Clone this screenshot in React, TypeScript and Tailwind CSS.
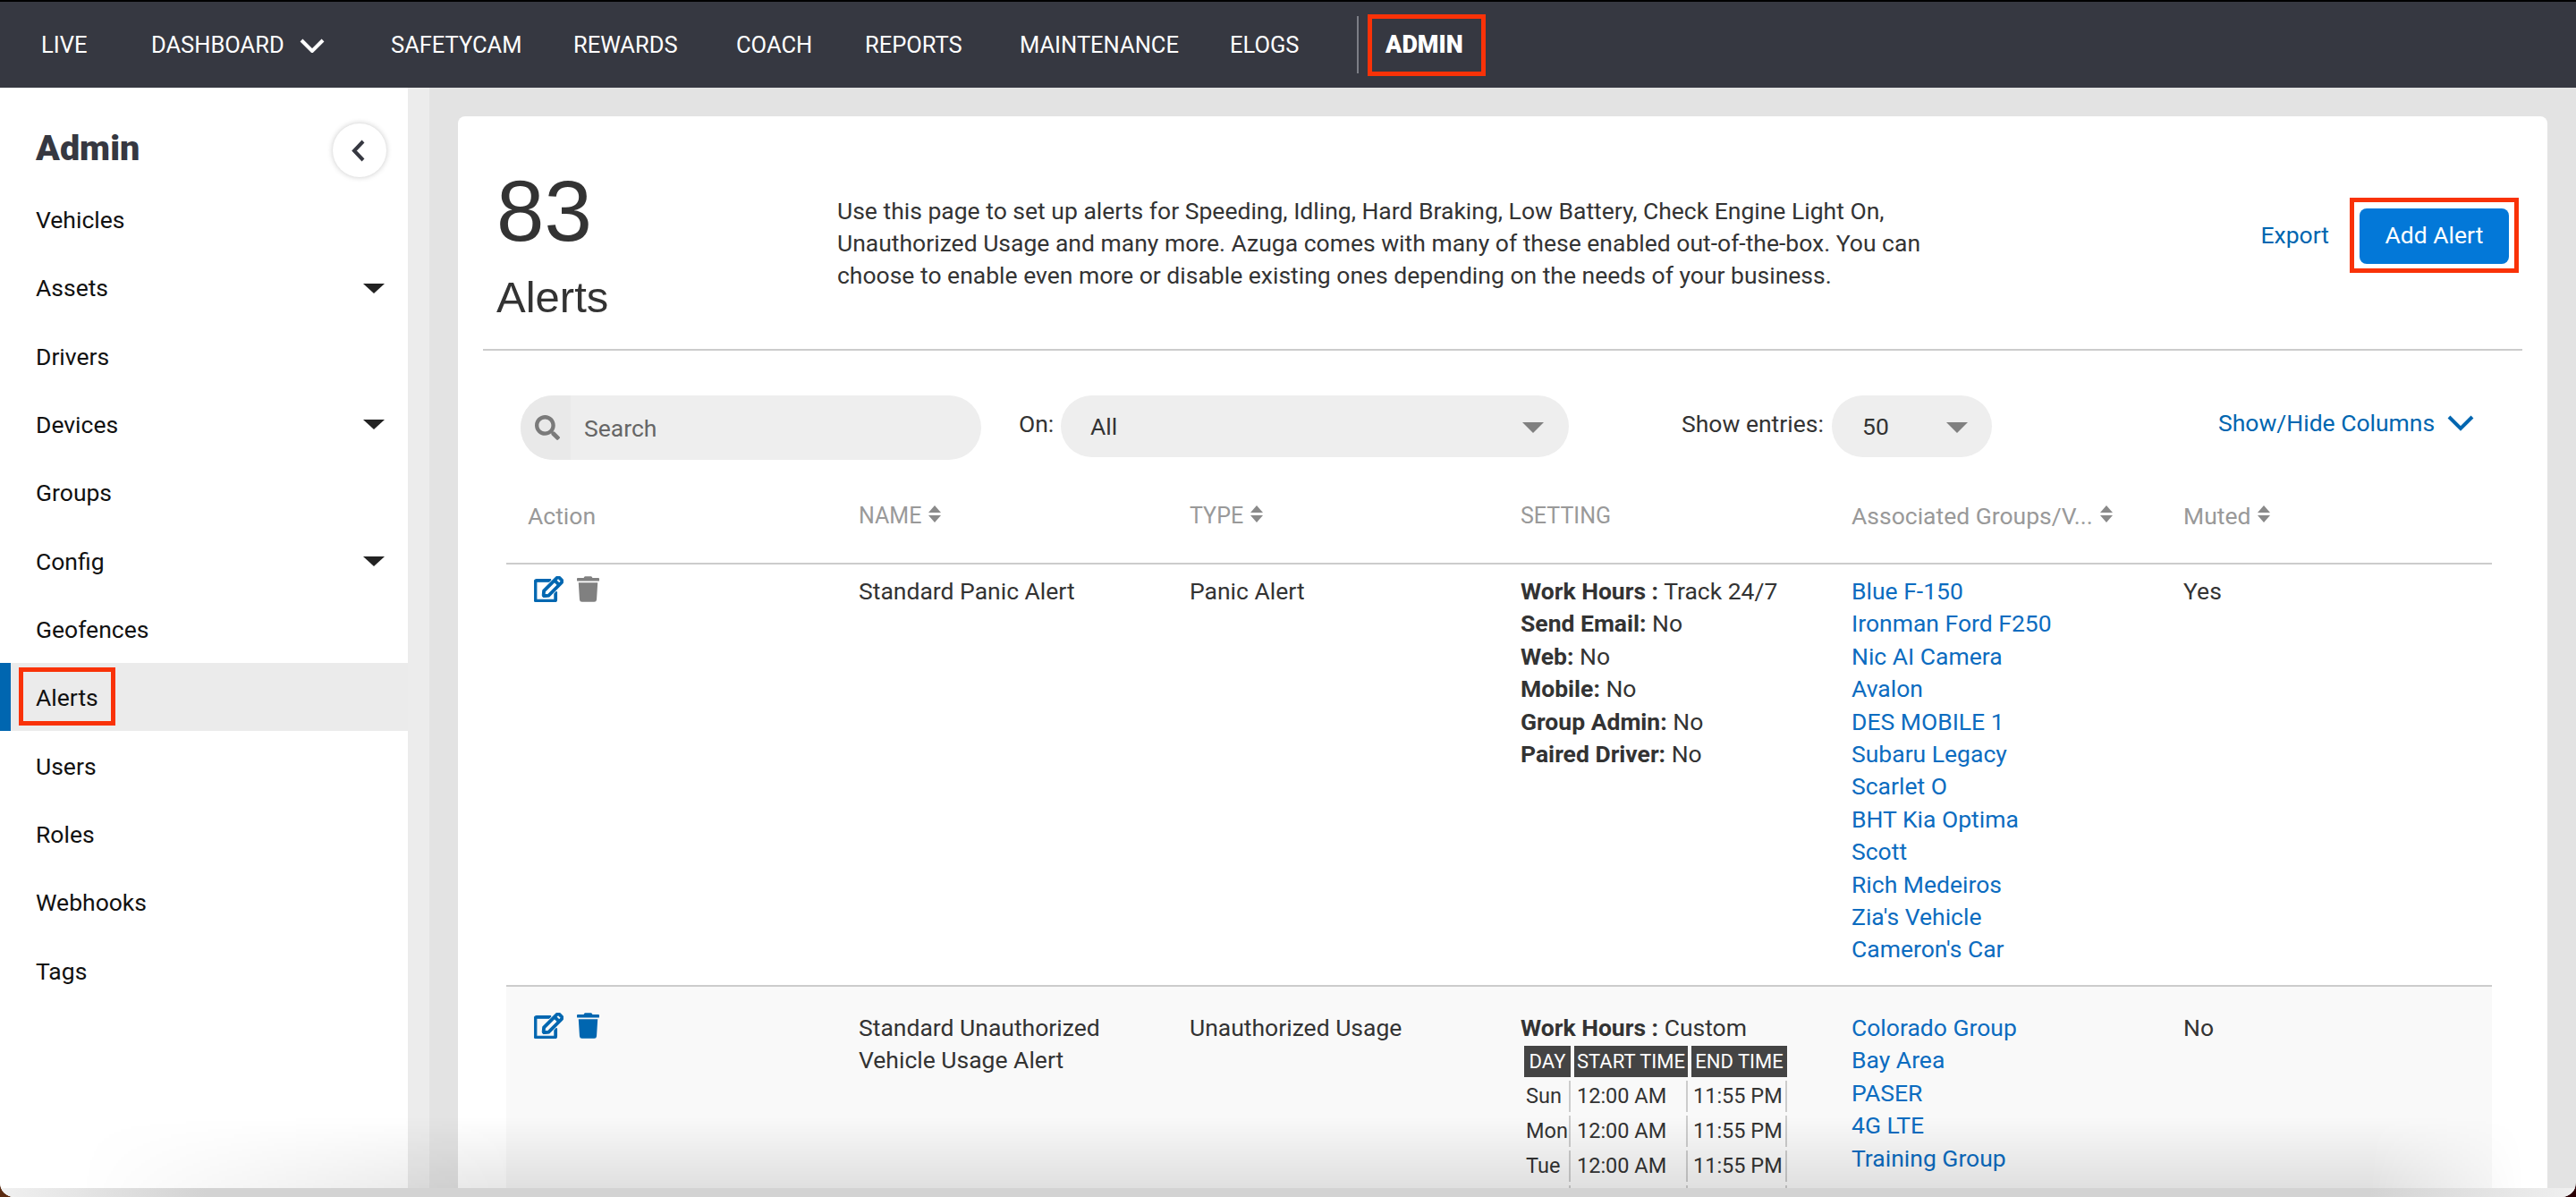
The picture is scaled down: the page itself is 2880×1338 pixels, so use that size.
import { FaRegEdit, FaTrash, FaSearch } from "react-icons/fa";

const columns = "grid grid-cols-[370px_370px_370px_370px_371px_369px]";

const nav = [
  { label: "LIVE", width: "w-[123px]" },
  { label: "DASHBOARD", width: "w-[268px]", chevron: true },
  { label: "SAFETYCAM", width: "w-[204px]" },
  { label: "REWARDS", width: "w-[182px]" },
  { label: "COACH", width: "w-[144px]" },
  { label: "REPORTS", width: "w-[173px]" },
  { label: "MAINTENANCE", width: "w-[235px]" },
  { label: "ELOGS", width: "w-[142px]" },
];

const side = [
  { label: "Vehicles" },
  { label: "Assets", caret: true },
  { label: "Drivers" },
  { label: "Devices", caret: true },
  { label: "Groups" },
  { label: "Config", caret: true },
  { label: "Geofences" },
  { label: "Alerts", active: true },
  { label: "Users" },
  { label: "Roles" },
  { label: "Webhooks" },
  { label: "Tags" },
];

const groupsA = [
  "Blue F-150",
  "Ironman Ford F250",
  "Nic AI Camera",
  "Avalon",
  "DES MOBILE 1",
  "Subaru Legacy",
  "Scarlet O",
  "BHT Kia Optima",
  "Scott",
  "Rich Medeiros",
  "Zia's Vehicle",
  "Cameron's Car",
];
const groupsB = ["Colorado Group", "Bay Area", "PASER", "4G LTE", "Training Group"];
const settings = [
  ["Send Email:", "No"],
  ["Web:", "No"],
  ["Mobile:", "No"],
  ["Group Admin:", "No"],
  ["Paired Driver:", "No"],
];
const days = ["Sun", "Mon", "Tue"];

function Sort() {
  return (
    <svg width="14" height="19" viewBox="0 0 14 19" className="mb-[6px] ml-[8px] shrink-0 fill-[#8a8a8a]">
      <polygon points="7,0 14,8 0,8" />
      <polygon points="0,11 14,11 7,19" />
    </svg>
  );
}

function SelectArrow() {
  return (
    <svg width="24" height="12" viewBox="0 0 24 12" className="fill-[#808080]">
      <polygon points="0,0 24,0 12,12" />
    </svg>
  );
}

function Head({ children, sort, upper }: { children: string; sort?: boolean; upper?: boolean }) {
  return (
    <div className={`flex items-center whitespace-nowrap pl-[24px] text-[#999999] ${upper ? "text-[25px]" : "text-[26.5px]"}`}>
      {children}
      {sort && <Sort />}
    </div>
  );
}

function Links({ items }: { items: string[] }) {
  return (
    <div className="pl-[24px] text-[#0c6cc0]">
      {items.map((g) => (
        <div key={g}>{g}</div>
      ))}
    </div>
  );
}

function Actions({ trash }: { trash: string }) {
  return (
    <div className="flex gap-[15px] pl-[31px] pt-[1px]">
      <FaRegEdit stroke="currentColor" strokeWidth={18} className="h-[29px] w-[33px] text-[#0066b0]" />
      <FaTrash className={`h-[29px] w-[25px] ${trash}`} />
    </div>
  );
}

export default function App() {
  return (
    <div className="h-[1338px] w-[2880px] overflow-hidden bg-[linear-gradient(to_right,#5a2a10,#5a2a10_50%,#2a0005)] [font-family:Roboto,'Liberation_Sans',sans-serif]">
      <div className="relative flex h-[1338px] flex-col overflow-hidden rounded-b-[16px] bg-[#e3e3e3]">
        <header className="flex h-[98px] shrink-0 items-center border-t-2 border-black bg-[#363841] pl-[46px] text-[25.5px] text-white">
          {nav.map((n) => (
            <div key={n.label} className={`flex items-center pt-[1px] ${n.width}`}>
              {n.label}
              {n.chevron && (
                <svg width="28" height="16" viewBox="0 0 28 16" className="ml-[17px] fill-none stroke-white stroke-[4]">
                  <polyline points="2,2 14,14 26,2" />
                </svg>
              )}
            </div>
          ))}
          <div className="h-[64px] w-[2px] bg-[#7c7e86]" />
          <div className="ml-[10px] flex h-[69px] w-[132px] items-center border-[5px] border-[#f93208] pl-[15px] text-[27px] font-black">
            ADMIN
          </div>
        </header>

        <div className="flex min-h-0 flex-1">
          <aside className="w-[456px] shrink-0 bg-white text-[26.5px] text-[#111111]">
            <div className="flex h-[108px] items-center justify-between pl-[40px] pr-[24px] pt-[32px]">
              <span className="mb-[4px] text-[39.5px] font-black text-[#363841]">Admin</span>
              <div className="flex h-[60px] w-[60px] items-center justify-center rounded-full bg-white shadow-[0_0_6px_rgba(0,0,0,0.22)]">
                <svg width="18" height="25" viewBox="0 0 18 25" className="mr-[2px] fill-none stroke-[#363841] stroke-[4]">
                  <polyline points="14,2 4,12.5 14,23" />
                </svg>
              </div>
            </div>
            {side.map((s) =>
              s.active ? (
                <div key={s.label} className="flex h-[76.36px] items-center border-l-[12px] border-[#0066b0] bg-[#ebebeb] pl-[9px]">
                  <div className="flex h-[65px] items-center border-[5px] border-[#f93208] px-[14px] pt-[3px]">{s.label}</div>
                </div>
              ) : (
                <div key={s.label} className="flex h-[76.36px] items-center justify-between pl-[40px] pr-[26px] pt-[3px]">
                  {s.label}
                  {s.caret && (
                    <svg width="24" height="11" viewBox="0 0 24 11" className="fill-[#222222]">
                      <polygon points="0,0 24,0 12,11" />
                    </svg>
                  )}
                </div>
              )
            )}
          </aside>

          <div className="w-[24px] shrink-0 bg-[#ececec]" />

          <main className="min-w-0 flex-1 pb-0 pl-[32px] pr-[32px] pt-[32px]">
            <div className="h-full overflow-hidden rounded-t-[8px] bg-white text-[26.5px] leading-[36.4px] text-[#333333]">
              <div className="mx-[28px] flex h-[262px] border-b-2 border-[#cccccc]">
                <div className="w-[396px] shrink-0 pl-[15px] pt-[58px] [font-family:'Liberation_Sans',sans-serif]">
                  <div className="text-[96px] leading-[96px]">83</div>
                  <div className="mt-[18px] text-[49px] leading-[60px]">Alerts</div>
                </div>
                <p className="whitespace-nowrap pt-[88px] leading-[36px]">
                  Use this page to set up alerts for Speeding, Idling, Hard Braking, Low Battery, Check Engine Light On,
                  <br />
                  Unauthorized Usage and many more. Azuga comes with many of these enabled out-of-the-box. You can
                  <br />
                  choose to enable even more or disable existing ones depending on the needs of your business.
                </p>
                <div className="ml-auto mr-[4px] mt-[91px] flex items-center gap-[23px] self-start">
                  <span className="text-[#0066b0]">Export</span>
                  <div className="flex h-[84px] w-[189px] items-center justify-center border-[5px] border-[#f93208]">
                    <button className="mt-[1px] h-[62px] w-[167px] rounded-[8px] bg-[#0378d8] text-white">Add Alert</button>
                  </div>
                </div>
              </div>

              <div className="mt-[50px] flex items-start pl-[70px]">
                <div className="flex h-[72px] w-[515px] overflow-hidden rounded-full bg-[#eeeeee]">
                  <div className="flex w-[56px] items-center justify-center bg-[#e9e9e9] pl-[4px]">
                    <FaSearch className="h-[28px] w-[28px] text-[#7a7a7a]" />
                  </div>
                  <div className="flex items-center pl-[15px] pt-[2px] text-[#666666]">Search</div>
                </div>
                <div className="ml-[42px] flex h-[64px] w-[47px] items-center">On:</div>
                <div className="flex h-[69px] w-[568px] items-center justify-between rounded-full bg-[#eeeeee] pl-[33px] pr-[28px] pt-[2px]">
                  All
                  <SelectArrow />
                </div>
                <div className="ml-[126px] flex h-[64px] w-[168px] items-center whitespace-nowrap">Show entries:</div>
                <div className="flex h-[69px] w-[179px] items-center justify-between rounded-full bg-[#eeeeee] pl-[34px] pr-[27px] pt-[2px]">
                  50
                  <SelectArrow />
                </div>
                <div className="ml-[253px] flex h-[62px] items-center whitespace-nowrap text-[#0066b0]">
                  Show/Hide Columns
                  <svg width="30" height="18" viewBox="0 0 30 18" className="ml-[14px] fill-none stroke-[#0066b0] stroke-[4]">
                    <polyline points="2,2 15,15 28,2" />
                  </svg>
                </div>
              </div>

              <div className="ml-[54px] w-[2220px]">
                <div className={`${columns} h-[117px] items-center border-b-2 border-[#cccccc] pt-[11px]`}>
                  <Head>Action</Head>
                  <Head sort upper>NAME</Head>
                  <Head sort upper>TYPE</Head>
                  <Head upper>SETTING</Head>
                  <Head sort>Associated Groups/V...</Head>
                  <Head sort>Muted</Head>
                </div>

                <div className={`${columns} border-b-2 border-[#cccccc] pb-[21px] pt-[12px]`}>
                  <Actions trash="text-[#808080]" />
                  <div className="pl-[24px]">Standard Panic Alert</div>
                  <div className="pl-[24px]">Panic Alert</div>
                  <div className="pl-[24px]">
                    <div>
                      <b>Work Hours :</b> Track 24/7
                    </div>
                    {settings.map(([k, v]) => (
                      <div key={k}>
                        <b>{k}</b> {v}
                      </div>
                    ))}
                  </div>
                  <Links items={groupsA} />
                  <div className="pl-[24px]">Yes</div>
                </div>

                <div className={`${columns} bg-[#f9f9f9] pt-[28px]`}>
                  <Actions trash="text-[#0066b0]" />
                  <div className="pl-[24px]">
                    Standard Unauthorized
                    <br />
                    Vehicle Usage Alert
                  </div>
                  <div className="pl-[24px]">Unauthorized Usage</div>
                  <div className="pl-[24px]">
                    <div>
                      <b>Work Hours :</b> Custom
                    </div>
                    <div className="ml-[4px] mt-[2px] grid grid-cols-[52px_127px_107px] gap-[4px] text-[23.5px] leading-[35px]">
                      <div className="bg-[#444444] text-center text-[22px] text-white">DAY</div>
                      <div className="bg-[#444444] text-center text-[22px] text-white">START TIME</div>
                      <div className="bg-[#444444] text-center text-[22px] text-white">END TIME</div>
                      {days.map((d) => (
                        <div key={d} className="contents">
                          <div className="border-r-2 border-[#cccccc] pl-[2px]">{d}</div>
                          <div className="border-r-2 border-[#cccccc] pl-[3px]">12:00 AM</div>
                          <div className="border-r-2 border-[#cccccc] pl-[2px]">11:55 PM</div>
                        </div>
                      ))}
                      <div className="h-[3px] border-r-2 border-[#cccccc]" />
                      <div className="h-[3px] border-r-2 border-[#cccccc]" />
                      <div className="h-[3px] border-r-2 border-[#cccccc]" />
                    </div>
                  </div>
                  <Links items={groupsB} />
                  <div className="pl-[24px]">No</div>
                </div>
              </div>
            </div>
          </main>
        </div>

        <div className="pointer-events-none absolute inset-x-0 bottom-[10px] h-[80px] bg-gradient-to-t from-black/10 to-transparent [mask-image:linear-gradient(to_right,transparent_3%,black_20%,black_92%,transparent_98%)]" />
        <div className="absolute inset-x-0 bottom-0 h-[10px] bg-[linear-gradient(to_right,#f0f0f0,#d3d3d3_8%,#d3d3d3_92%,#f0f0f0)]" />
      </div>
    </div>
  );
}
